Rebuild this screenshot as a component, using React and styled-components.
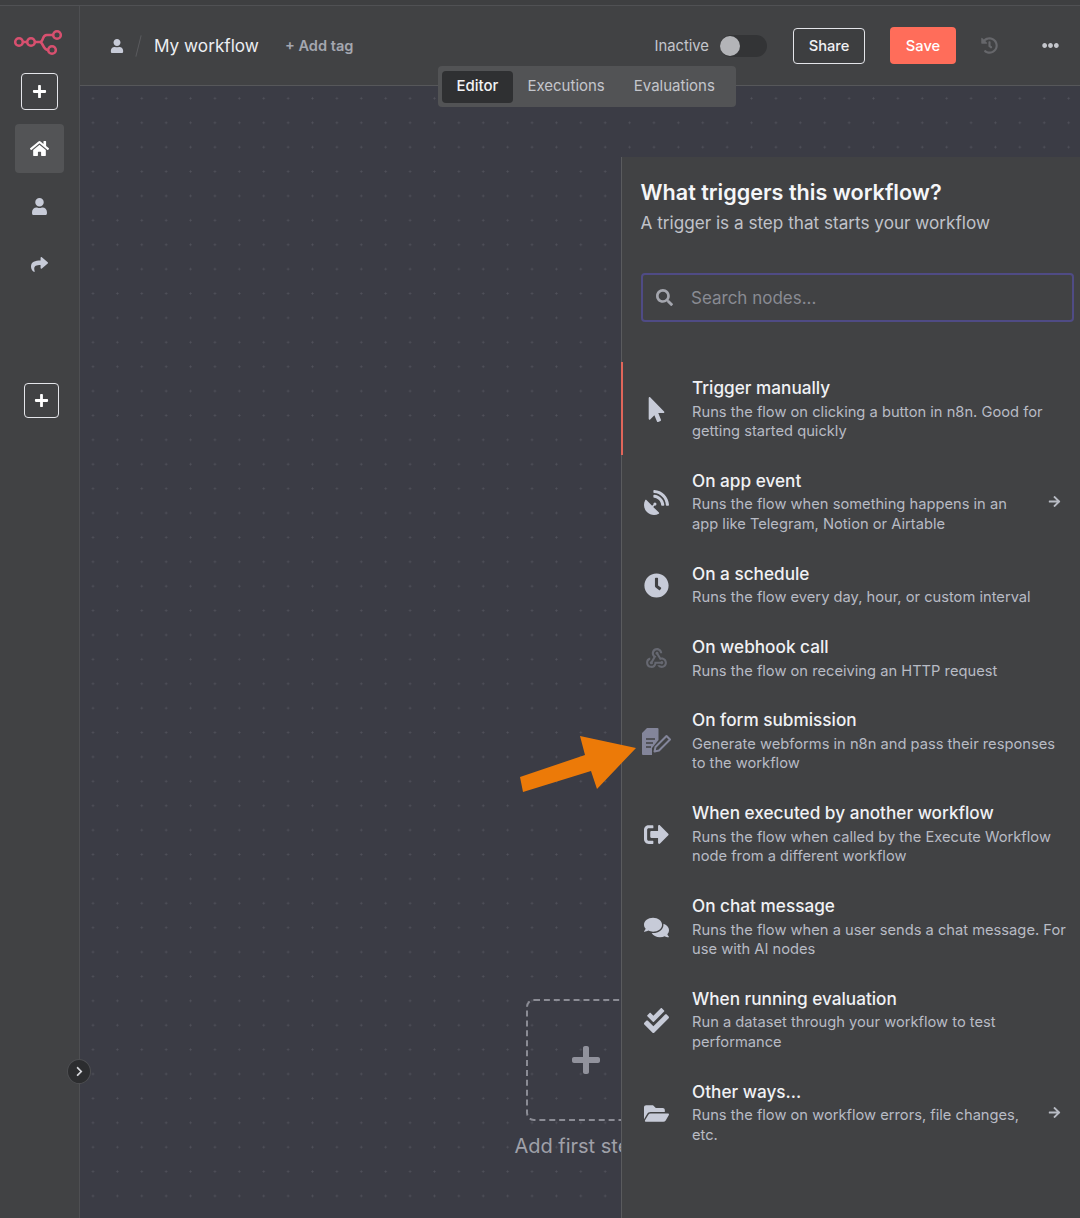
import React from 'react';
import styled, { createGlobalStyle } from 'styled-components';
import {
  FaArrowRight, FaCheckDouble, FaChevronRight, FaClock, FaComments, FaEllipsisH,
  FaFolderOpen, FaHistory, FaHome, FaMousePointer, FaPlus, FaSatelliteDish, FaSearch, FaShare,
  FaSignOutAlt, FaUser,
} from 'react-icons/fa';
import { MdWebhook } from 'react-icons/md';

function FormIcon() {
  return (
    <svg width="29" height="27" viewBox="0 0 29 27">
      <path d="M5 0H15.5a1 1 0 0 1 1 1V12L10 20V27H1a1 1 0 0 1-1-1V5Z" fill="currentColor" />
      <path d="M4 11H13M4 15H11M4 19H9" stroke="#414244" strokeWidth="1.4" fill="none" />
      <path d="M12.5 23.5L13.5 19L24.5 8L28 11.5L17 22.5Z" fill="none" stroke="currentColor" strokeWidth="2" strokeLinejoin="round" />
    </svg>
  );
}

const triggers = [
  { title: 'Trigger manually', desc: 'Runs the flow on clicking a button in n8n. Good for getting started quickly', icon: FaMousePointer, active: true },
  { title: 'On app event', desc: 'Runs the flow when something happens in an app like Telegram, Notion or Airtable', icon: FaSatelliteDish, more: true },
  { title: 'On a schedule', desc: 'Runs the flow every day, hour, or custom interval', icon: FaClock },
  { title: 'On webhook call', desc: 'Runs the flow on receiving an HTTP request', icon: MdWebhook, tone: '#666871' },
  { title: 'On form submission', desc: 'Generate webforms in n8n and pass their responses to the workflow', icon: FormIcon, tone: '#83859a' },
  { title: 'When executed by another workflow', desc: 'Runs the flow when called by the Execute Workflow node from a different workflow', icon: FaSignOutAlt },
  { title: 'On chat message', desc: 'Runs the flow when a user sends a chat message. For use with AI nodes', icon: FaComments },
  { title: 'When running evaluation', desc: 'Run a dataset through your workflow to test performance', icon: FaCheckDouble },
  { title: 'Other ways...', desc: 'Runs the flow on workflow errors, file changes, etc.', icon: FaFolderOpen, more: true },
];

function Logo() {
  return (
    <svg width="50" height="30" viewBox="0 0 50 30" fill="none" stroke="#d8506f" strokeWidth="2.6">
      <circle cx="6" cy="14" r="3.8" />
      <circle cx="18" cy="14" r="3.8" />
      <circle cx="39" cy="22" r="3.8" />
      <circle cx="44" cy="7" r="3.8" />
      <path d="M9.8 14h4.4M21.8 14h5c3.5 0 3 8 8.4 8M26.8 14c4.5 0 1.5-7 7-7h6.4" />
    </svg>
  );
}

export default function App() {
  return (
    <Page>
      <GlobalStyle />
      <TopStrip />
      <Body>
        <Sidebar>
          <LogoSlot><Logo /></LogoSlot>
          <NewButton><FaPlus size={15} /></NewButton>
          <NavItem $active><FaHome size={19} /></NavItem>
          <NavItem><FaUser size={17} /></NavItem>
          <NavItem><FaShare size={17} /></NavItem>
          <AddProject><FaPlus size={15} /></AddProject>
          <Collapse><FaChevronRight size={11} /></Collapse>
        </Sidebar>
        <Main>
          <Header>
            <Crumbs>
              <FaUser size={14} color="#c7cbd8" />
              <Slash />
              <WorkflowName>My workflow</WorkflowName>
              <AddTag>+ Add tag</AddTag>
            </Crumbs>
            <Actions>
              <StatusLabel>Inactive</StatusLabel>
              <Toggle><Knob /></Toggle>
              <ShareButton>Share</ShareButton>
              <SaveButton>Save</SaveButton>
              <HistoryIcon><FaHistory size={17} /></HistoryIcon>
              <MoreIcon><FaEllipsisH size={17} /></MoreIcon>
            </Actions>
          </Header>
          <Tabs>
            <Tab $active>Editor</Tab>
            <Tab>Executions</Tab>
            <Tab>Evaluations</Tab>
          </Tabs>
          <Canvas>
            <FirstStep>
              <StepBox><FaPlus size={32} /></StepBox>
              <StepLabel>Add first step</StepLabel>
            </FirstStep>
            <Panel>
              <PanelHead>
                <PanelTitle>What triggers this workflow?</PanelTitle>
                <PanelSub>A trigger is a step that starts your workflow</PanelSub>
              </PanelHead>
              <Search>
                <FaSearch size={17} />
                <SearchInput placeholder="Search nodes..." readOnly />
              </Search>
              <List>
                {triggers.map((t) => (
                  <Row key={t.title} $active={t.active}>
                    <RowIcon $tone={t.tone}><t.icon size={25} /></RowIcon>
                    <RowText $more={t.more}>
                      <RowTitle>{t.title}</RowTitle>
                      <RowDesc>{t.desc}</RowDesc>
                    </RowText>
                    {t.more && <RowArrow><FaArrowRight size={13} /></RowArrow>}
                  </Row>
                ))}
              </List>
            </Panel>
          </Canvas>
        </Main>
      </Body>
      <Callout width="118" height="58" viewBox="0 0 118 58">
        <path d="M0 41L3 56L71 35L77 53L116 12L60 0L65 19Z" fill="#ec7a08" />
      </Callout>
    </Page>
  );
}

const GlobalStyle = createGlobalStyle`
  html, body { margin: 0; padding: 0; background: #414244; }
  * { box-sizing: border-box; }
  body { font-family: Inter, "Liberation Sans", sans-serif; overflow: hidden; }
`;

const Page = styled.div`
  position: relative;
  width: 1080px;
  height: 1218px;
  display: flex;
  flex-direction: column;
  overflow: hidden;
`;

const TopStrip = styled.div`
  height: 6px;
  flex: none;
  background: #3e3f41;
  border-bottom: 1px solid #505154;
`;

const Body = styled.div`
  flex: 1;
  display: flex;
  min-height: 0;
`;

const Sidebar = styled.aside`
  position: relative;
  width: 80px;
  flex: none;
  display: flex;
  flex-direction: column;
  align-items: center;
  background: #414244;
  border-right: 1px solid #4e4f52;
`;

const LogoSlot = styled.div`
  height: 30px;
  margin-top: 22px;
  margin-bottom: 15px;
  margin-left: -4px;
`;

const NewButton = styled.button`
  width: 37px;
  height: 37px;
  margin-bottom: 14px;
  margin-left: -1px;
  display: flex;
  align-items: center;
  justify-content: center;
  padding: 0;
  color: #fff;
  background: transparent;
  border: 1px solid #e4e5ea;
  border-radius: 4px;
`;

const NavItem = styled.div`
  width: 49px;
  height: 49px;
  margin-bottom: 9px;
  margin-left: -1px;
  display: flex;
  align-items: center;
  justify-content: center;
  color: ${(p) => (p.$active ? '#fff' : '#c7cbd8')};
  background: ${(p) => (p.$active ? '#535456' : 'transparent')};
  border-radius: 4px;
`;

const AddProject = styled(NewButton)`
  width: 35px;
  height: 35px;
  margin-top: 85px;
  margin-left: 4px;
`;

const Collapse = styled.div`
  position: absolute;
  right: -12px;
  top: 1053px;
  width: 24px;
  height: 25px;
  display: flex;
  align-items: center;
  justify-content: center;
  color: #d5d6da;
  background: #2c2d2f;
  border: 1px solid #4e4f52;
  border-radius: 50%;
  z-index: 2;
`;

const Main = styled.main`
  position: relative;
  flex: 1;
  min-width: 0;
  display: flex;
  flex-direction: column;
`;

const Header = styled.header`
  height: 80px;
  flex: none;
  display: flex;
  align-items: flex-start;
  justify-content: space-between;
  padding: 21px 21px 0 30px;
  background: #414244;
  border-bottom: 1px solid #56575a;
`;

const Crumbs = styled.div`
  display: flex;
  align-items: center;
  height: 37px;
`;

const Slash = styled.span`
  width: 1px;
  height: 22px;
  margin: 0 15px 0 14px;
  background: #5a5b5e;
  transform: rotate(14deg);
`;

const WorkflowName = styled.span`
  font-size: 17.2px;
  color: #eceef2;
`;

const AddTag = styled.span`
  margin-left: 26px;
  font-size: 14.6px;
  font-weight: 600;
  color: #a4a7b0;
`;

const Actions = styled.div`
  display: flex;
  align-items: center;
  height: 37px;
`;

const StatusLabel = styled.span`
  font-size: 14.8px;
  color: #c4c6cc;
`;

const Toggle = styled.div`
  width: 47px;
  height: 22px;
  margin-left: 11px;
  padding: 1px 0;
  background: #333436;
  border-radius: 11px;
`;

const Knob = styled.div`
  width: 20px;
  height: 20px;
  background: #b3b4b8;
  border-radius: 50%;
`;

const ShareButton = styled.button`
  width: 72px;
  height: 36px;
  margin-left: 26px;
  padding: 0;
  font: 500 14.7px Inter, sans-serif;
  color: #f0f1f4;
  background: #3d3e40;
  border: 1px solid #e4e5ea;
  border-radius: 4px;
`;

const SaveButton = styled.button`
  width: 66px;
  height: 37px;
  margin-left: 25px;
  padding: 0;
  font: 500 14.7px Inter, sans-serif;
  color: #fff;
  background: #ff6d5a;
  border: 0;
  border-radius: 4px;
`;

const HistoryIcon = styled.span`
  display: flex;
  margin-left: 25px;
  color: #66676b;
`;

const MoreIcon = styled.span`
  display: flex;
  margin-left: 44px;
  color: #c4c6cc;
`;

const Tabs = styled.nav`
  position: absolute;
  left: 358px;
  top: 60px;
  width: 298px;
  height: 41px;
  display: flex;
  align-items: center;
  padding: 0 4px;
  background: #525355;
  border-radius: 4px;
  z-index: 3;
`;

const Tab = styled.div`
  height: 32px;
  padding: 0 14.5px 2px;
  display: flex;
  align-items: center;
  font-size: 15px;
  font-weight: ${(p) => (p.$active ? 500 : 400)};
  color: ${(p) => (p.$active ? '#f2f3f5' : '#c4c6cc')};
  background: ${(p) => (p.$active ? '#2f3032' : 'transparent')};
  border-radius: 4px;
`;

const Canvas = styled.section`
  position: relative;
  flex: 1;
  min-height: 0;
  overflow: hidden;
  background-color: #3b3c45;
  background-image: radial-gradient(circle, #51525b 0.9px, transparent 1.1px);
  background-size: 24.4px 24.4px;
  background-position: 0.8px 0.2px;
`;

const FirstStep = styled.div`
  position: absolute;
  left: 426px;
  top: 913px;
  width: 160px;
  display: flex;
  flex-direction: column;
  align-items: center;
`;

const StepBox = styled.div`
  width: 121px;
  height: 122px;
  display: flex;
  align-items: center;
  justify-content: center;
  color: #91929c;
  border: 2px dashed #8b8c95;
  border-radius: 8px;
`;

const StepLabel = styled.div`
  margin-top: 13px;
  margin-right: 16px;
  font-size: 20px;
  white-space: nowrap;
  color: #a0a1a9;
`;

const Panel = styled.div`
  position: absolute;
  left: 541px;
  top: 71px;
  right: 0;
  bottom: 0;
  background: #414244;
  border-left: 1px solid #5a5b5e;
  z-index: 2;
`;

const PanelHead = styled.div`
  padding: 23px 0 0 18.5px;
`;

const PanelTitle = styled.h2`
  margin: 0;
  font-size: 21.6px;
  line-height: 24px;
  font-weight: 600;
  color: #f5f6f8;
`;

const PanelSub = styled.p`
  margin: 8px 0 0;
  font-size: 17.15px;
  line-height: 22px;
  color: #c0c2c9;
`;

const Search = styled.div`
  width: 433px;
  height: 49px;
  margin: 39px 0 0 19px;
  padding: 0 13px;
  display: flex;
  align-items: center;
  gap: 18px;
  color: #a4a6ae;
  border: 2px solid #4f4b85;
  border-radius: 4px;
`;

const SearchInput = styled.input`
  flex: 1;
  min-width: 0;
  padding: 0;
  font: 400 17px Inter, sans-serif;
  background: transparent;
  border: 0;
  outline: 0;
  &::placeholder { color: #898b93; opacity: 1; }
`;

const List = styled.div`
  margin-top: 40px;
`;

const Row = styled.div`
  position: relative;
  display: flex;
  padding: 15px 7px 13.2px 0;
  &::before {
    content: '';
    display: ${(p) => (p.$active ? 'block' : 'none')};
    position: absolute;
    left: -1px;
    top: 0;
    bottom: 0;
    width: 2px;
    background: #e0665a;
  }
`;

const RowIcon = styled.div`
  width: 69px;
  margin-right: 1px;
  flex: none;
  display: flex;
  align-items: center;
  justify-content: center;
  color: ${(p) => p.$tone || '#c7cbd8'};
`;

const RowText = styled.div`
  width: ${(p) => (p.$more ? '340px' : '378px')};
`;

const RowTitle = styled.div`
  font-size: 17.2px;
  line-height: 22px;
  font-weight: 500;
  color: #f0f1f4;
`;

const RowDesc = styled.div`
  margin-top: 3.5px;
  font-size: 14.7px;
  line-height: 19.6px;
  color: #b8bbc4;
`;

const RowArrow = styled.div`
  position: absolute;
  right: 19px;
  top: 50%;
  margin-top: -6px;
  display: flex;
  color: #b8bbc4;
`;

const Callout = styled.svg`
  position: absolute;
  left: 520px;
  top: 736px;
  z-index: 5;
`;
